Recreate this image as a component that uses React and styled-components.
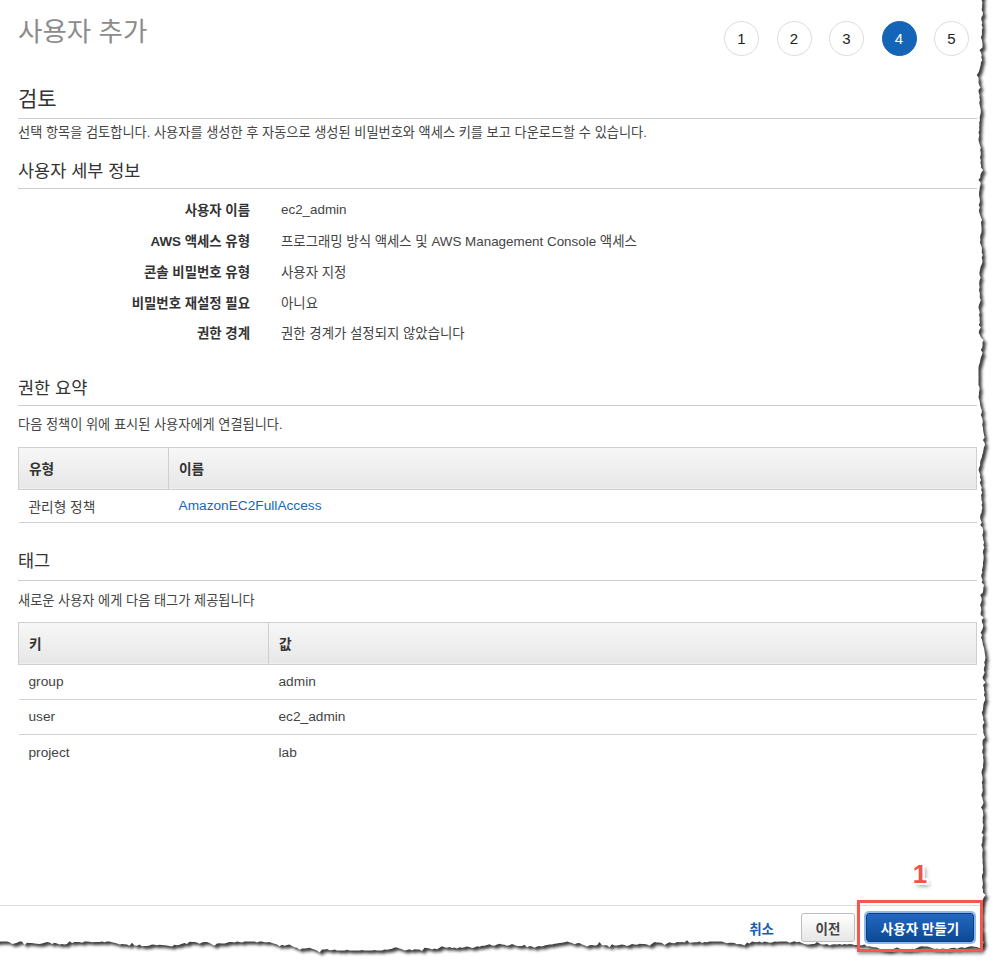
import React from 'react';
import styled, { createGlobalStyle } from 'styled-components';

const FONT = `"Liberation Sans", "Noto Sans CJK KR", sans-serif`;

const GlobalStyle = createGlobalStyle`
  html, body {
    margin: 0;
    padding: 0;
    background: #fff;
  }
  body {
    font-family: ${FONT};
    color: #444;
  }
  * {
    box-sizing: border-box;
  }
`;

const steps = [1, 2, 3, 4, 5];

const details = [
  ['사용자 이름', 'ec2_admin'],
  ['AWS 액세스 유형', '프로그래밍 방식 액세스 및 AWS Management Console 액세스'],
  ['콘솔 비밀번호 유형', '사용자 지정'],
  ['비밀번호 재설정 필요', '아니요'],
  ['권한 경계', '권한 경계가 설정되지 않았습니다'],
];

const tags = [
  ['group', 'admin'],
  ['user', 'ec2_admin'],
  ['project', 'lab'],
];

// torn paper edge, generated once
const makeEdge = () => {
  let s = 20231;
  const rand = () => {
    s = (s * 16807) % 2147483647;
    return (s - 1) / 2147483646;
  };
  const pts = [[-20, -20]];
  let off = 0;
  for (let y = -20; y <= 944; y += 2.5) {
    off += (rand() - 0.5) * 2.4;
    off = Math.max(-3.5, Math.min(3.5, off));
    const spike = rand() < 0.1 ? (rand() - 0.5) * 5 : 0;
    pts.push([982 + off + spike, y]);
  }
  off = 0;
  for (let x = 982; x >= -20; x -= 2.5) {
    off += (rand() - 0.5) * 2.6;
    off = Math.max(-4.5, Math.min(4.5, off));
    const spike = rand() < 0.12 ? (rand() - 0.5) * 5 : 0;
    pts.push([x, 946 + off + spike]);
  }
  return 'M' + pts.map(([x, y]) => `${x.toFixed(1)} ${y.toFixed(1)}`).join(' L') + ' Z';
};
const edgePath = makeEdge();

const TornEdge = () => (
  <EdgeSvg width="1001" height="963" viewBox="0 0 1001 963">
    <defs>
      <filter id="tornBlur" x="-5%" y="-5%" width="110%" height="110%">
        <feGaussianBlur stdDeviation="1.6" />
      </filter>
      <mask id="outside">
        <rect x="0" y="0" width="1001" height="963" fill="#fff" />
        <path d={edgePath} fill="#000" />
      </mask>
    </defs>
    <rect x="0" y="0" width="1001" height="963" fill="#fff" mask="url(#outside)" />
    <g mask="url(#outside)">
      <path d={edgePath} fill="#2a2a2a" opacity="0.9" transform="translate(3 3)" filter="url(#tornBlur)" />
    </g>
  </EdgeSvg>
);

const App = () => {
  return (
    <Page>
      <GlobalStyle />
      <Content>
        <TitleRow>
          <PageTitle>사용자 추가</PageTitle>
          <Steps>
            {steps.map((n) => (
              <Step key={n} $active={n === 4}>{n}</Step>
            ))}
          </Steps>
        </TitleRow>

        <SectionTitle $size={21} $mt={31} $pb={7}>검토</SectionTitle>
        <Description $mt={5}>
          선택 항목을 검토합니다. 사용자를 생성한 후 자동으로 생성된 비밀번호와 액세스 키를 보고 다운로드할 수 있습니다.
        </Description>

        <SectionTitle $size={17.5} $mt={17} $pb={5}>사용자 세부 정보</SectionTitle>
        <DetailGrid>
          {details.map(([label, value]) => (
            <React.Fragment key={label}>
              <DetailLabel>{label}</DetailLabel>
              <DetailValue>{value}</DetailValue>
            </React.Fragment>
          ))}
        </DetailGrid>

        <SectionTitle $size={17.5} $mt={28} $pb={5}>권한 요약</SectionTitle>
        <Description $mt={10}>다음 정책이 위에 표시된 사용자에게 연결됩니다.</Description>
        <Table $mt={13}>
          <colgroup>
            <col style={{ width: 150 }} />
            <col />
          </colgroup>
          <thead>
            <tr>
              <Th>유형</Th>
              <Th>이름</Th>
            </tr>
          </thead>
          <tbody>
            <Tr $h={33} $line>
              <Td>관리형 정책</Td>
              <Td>
                <PolicyLink>AmazonEC2FullAccess</PolicyLink>
              </Td>
            </Tr>
          </tbody>
        </Table>

        <SectionTitle $size={17.5} $mt={26} $pb={7}>태그</SectionTitle>
        <Description $mt={11}>새로운 사용자 에게 다음 태그가 제공됩니다</Description>
        <Table $mt={12}>
          <colgroup>
            <col style={{ width: 250 }} />
            <col />
          </colgroup>
          <thead>
            <tr>
              <Th>키</Th>
              <Th>값</Th>
            </tr>
          </thead>
          <tbody>
            {tags.map(([k, v], i) => (
              <Tr key={k} $h={35} $line={i < tags.length - 1}>
                <Td>{k}</Td>
                <Td>{v}</Td>
              </Tr>
            ))}
          </tbody>
        </Table>
      </Content>

      <Footer>
        <CancelLink>취소</CancelLink>
        <SecondaryButton>이전</SecondaryButton>
        <Highlight>
          <CalloutNumber>1</CalloutNumber>
          <PrimaryButton>사용자 만들기</PrimaryButton>
        </Highlight>
      </Footer>

      <TornEdge />
    </Page>
  );
};

export default App;

const Page = styled.div`
  position: relative;
  width: 1001px;
  height: 963px;
  overflow: hidden;
  display: flex;
  flex-direction: column;
  font-family: ${FONT};
`;

const Content = styled.div`
  flex: 1;
  padding: 0 24px 0 18px;
  display: flex;
  flex-direction: column;
`;

const TitleRow = styled.div`
  display: flex;
  justify-content: space-between;
  align-items: flex-start;
  padding-top: 17px;
`;

const PageTitle = styled.h1`
  margin: 0;
  font-size: 26.5px;
  line-height: 30px;
  font-weight: 400;
  color: #8c8c8c;
`;

const Steps = styled.div`
  display: flex;
  gap: 17.5px;
  margin: 4px 8px 0 0;
`;

const Step = styled.div`
  width: 35px;
  height: 35px;
  border-radius: 50%;
  display: flex;
  align-items: center;
  justify-content: center;
  font-family: "Liberation Sans", sans-serif;
  font-size: 15px;
  color: ${({ $active }) => ($active ? '#fff' : '#222')};
  background: ${({ $active }) => ($active ? '#1465b7' : '#fff')};
  border: 1px solid ${({ $active }) => ($active ? '#1465b7' : '#dcdcdc')};
`;

const SectionTitle = styled.h2`
  margin: ${({ $mt }) => $mt}px 0 0;
  padding-bottom: ${({ $pb }) => $pb}px;
  font-size: ${({ $size }) => $size}px;
  line-height: 24px;
  font-weight: 400;
  color: #333;
  border-bottom: 1px solid #cdcdcd;
`;

const Description = styled.p`
  margin: ${({ $mt }) => $mt}px 0 0;
  font-size: 13.2px;
  line-height: 18px;
  color: #444;
`;

const DetailGrid = styled.div`
  display: grid;
  grid-template-columns: 232px 1fr;
  grid-auto-rows: 30.75px;
  column-gap: 31px;
  margin-top: 5px;
  font-size: 13.4px;
  align-items: center;
`;

const DetailLabel = styled.div`
  text-align: right;
  font-weight: 700;
  color: #333;
`;

const DetailValue = styled.div`
  color: #444;
`;

const Table = styled.table`
  margin-top: ${({ $mt }) => $mt}px;
  width: 100%;
  border-collapse: collapse;
  table-layout: fixed;
  font-size: 13.7px;
`;

const Th = styled.th`
  height: 42px;
  padding: 0 10px;
  text-align: left;
  font-weight: 700;
  color: #333;
  background: linear-gradient(#f7f7f7, #e7e7e7);
  border: 1px solid #cfcfcf;
  & + & {
    border-left: 1px solid #d6d6d6;
  }
`;

const Tr = styled.tr`
  height: ${({ $h }) => $h}px;
  border-bottom: ${({ $line }) => ($line ? '1px solid #d2d2d2' : 'none')};
`;

const Td = styled.td`
  padding: 0 10px;
  color: #444;
`;

const PolicyLink = styled.span`
  color: #1466c0;
`;

const Footer = styled.div`
  height: 58px;
  border-top: 1px solid #dcdcdc;
  display: flex;
  justify-content: flex-end;
  align-items: flex-start;
  padding: 7px 27px 0 0;
  font-size: 13.5px;
`;

const CancelLink = styled.span`
  height: 29px;
  display: flex;
  align-items: center;
  margin-right: 27px;
  font-weight: 700;
  color: #1a5fae;
`;

const SecondaryButton = styled.div`
  width: 54px;
  height: 29px;
  margin-right: 11px;
  display: flex;
  align-items: center;
  justify-content: center;
  font-weight: 700;
  color: #444;
  border: 1px solid #bdbdbd;
  border-radius: 3px;
  background: linear-gradient(#ffffff, #e6e6e6);
`;

const Highlight = styled.div`
  position: relative;
  z-index: 3;
  &::after {
    content: '';
    position: absolute;
    left: -9px;
    right: -9px;
    top: -13px;
    bottom: -10px;
    border: 3px solid #ee5a4f;
    box-shadow: 1px 2px 3px rgba(0, 0, 0, 0.4);
    pointer-events: none;
  }
`;

const CalloutNumber = styled.div`
  position: absolute;
  left: 0;
  right: 0;
  top: -54px;
  text-align: center;
  font-family: "Liberation Sans", sans-serif;
  font-size: 26px;
  font-weight: 700;
  color: #ee5448;
  text-shadow: -2px -2px 0 #fff, 2px -2px 0 #fff, -2px 2px 0 #fff, 2px 2px 0 #fff,
    0 -2px 0 #fff, 0 2px 0 #fff, 2px 0 0 #fff, -2px 0 0 #fff,
    3px 3px 4px rgba(0, 0, 0, 0.45);
`;

const PrimaryButton = styled.div`
  width: 108px;
  height: 29px;
  display: flex;
  align-items: center;
  justify-content: center;
  font-weight: 700;
  color: #fff;
  border: 1px solid #0c3f7f;
  border-radius: 3px;
  background: linear-gradient(#2268c0, #0c4a94);
  box-shadow: 0 0 0 2px #8cb8ef;
`;

const EdgeSvg = styled.svg`
  position: absolute;
  left: 0;
  top: 0;
  z-index: 2;
  pointer-events: none;
`;
